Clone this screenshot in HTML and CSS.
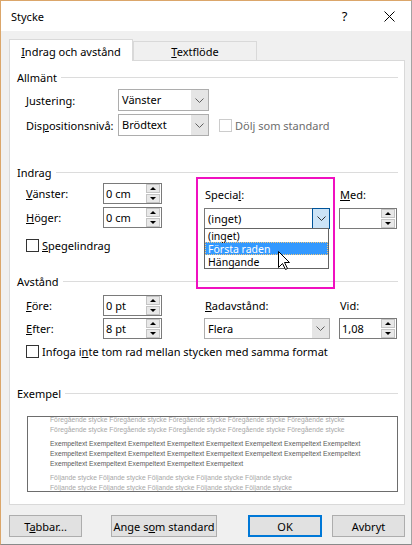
FILE: index.html
```html
<!DOCTYPE html>
<html lang="sv">
<head>
  <meta charset="UTF-8">
  <title>Stycke</title>
  <link rel="stylesheet" href="styles.css">
</head>
<body>
  <div class="dialog">
    <div class="titlebar">
      <span class="title">Stycke</span>
      <span class="caption-btn help">?</span>
      <span class="caption-btn close">
        <svg width="11" height="11" viewBox="0 0 11 11"><path d="M0.5 0.5 L10.5 10.5 M10.5 0.5 L0.5 10.5" stroke="#000" stroke-width="1" fill="none"/></svg>
      </span>
    </div>

    <div class="client">
      <div class="tabs">
        <div class="tab active"><u>I</u>ndrag och avstånd</div>
        <div class="tab"><u>T</u>extflöde</div>
      </div>

      <div class="panel">
        <!-- Allmänt -->
        <div class="group-head">Allmänt</div>
        <div class="rows-general">
          <div class="form-row">
            <span class="lbl-general"><u>J</u>ustering:</span>
            <div class="combo w-general">
              <span class="combo-text">Vänster</span>
              <span class="combo-btn"><svg width="9" height="5" viewBox="0 0 9 5"><polyline points="0.5,0.5 4.5,4.5 8.5,0.5" fill="none" stroke="#606060"/></svg></span>
            </div>
          </div>
          <div class="form-row">
            <span class="lbl-general">Dis<u>p</u>ositionsnivå:</span>
            <div class="combo w-general">
              <span class="combo-text">Brödtext</span>
              <span class="combo-btn"><svg width="9" height="5" viewBox="0 0 9 5"><polyline points="0.5,0.5 4.5,4.5 8.5,0.5" fill="none" stroke="#606060"/></svg></span>
            </div>
            <span class="check disabled"><span class="box"></span>Dölj som standard</span>
          </div>
        </div>

        <!-- Indrag -->
        <div class="group-head head-indent">Indrag</div>
        <div class="section-indent">
          <div class="col-left">
            <div class="form-row">
              <span class="lbl-indent"><u>V</u>änster:</span>
              <div class="spin">
                <span class="spin-text">0 cm</span>
                <svg class="spin-btns" width="14" height="19" viewBox="0 0 14 19"><rect x="0.5" y="0.5" width="13" height="8" fill="#e8e8e8" stroke="#c4c4c4"/><rect x="0.5" y="10.5" width="13" height="8" fill="#e8e8e8" stroke="#c4c4c4"/><polygon points="4,6 10,6 7,3" fill="#000"/><polygon points="4,13 10,13 7,16" fill="#000"/></svg>
              </div>
            </div>
            <div class="form-row">
              <span class="lbl-indent"><u>H</u>öger:</span>
              <div class="spin">
                <span class="spin-text">0 cm</span>
                <svg class="spin-btns" width="14" height="19" viewBox="0 0 14 19"><rect x="0.5" y="0.5" width="13" height="8" fill="#e8e8e8" stroke="#c4c4c4"/><rect x="0.5" y="10.5" width="13" height="8" fill="#e8e8e8" stroke="#c4c4c4"/><polygon points="4,6 10,6 7,3" fill="#000"/><polygon points="4,13 10,13 7,16" fill="#000"/></svg>
              </div>
            </div>
            <div class="check-row">
              <span class="check"><span class="box"></span><span><u>S</u>pegelindrag</span></span>
            </div>
          </div>

          <div class="col-special">
            <div class="field-label">Specia<u>l</u>:</div>
            <div class="combo open">
              <span class="combo-text">(inget)</span>
              <span class="combo-btn"><svg width="9" height="5" viewBox="0 0 9 5"><polyline points="0.5,0.5 4.5,4.5 8.5,0.5" fill="none" stroke="#333"/></svg></span>
            </div>
            <ul class="droplist">
              <li><span>(inget)</span></li>
              <li class="selected"><span>Första raden</span></li>
              <li><span>Hängande</span></li>
              <svg class="pointer" width="13" height="20" viewBox="0 0 13 20"><path d="M0.5 0.5 L0.5 16.5 L4.5 12.5 L7.5 18.5 L9.5 17.5 L6.5 11.5 L11.5 11.5 Z" fill="#fff" stroke="#000" stroke-linejoin="round"/></svg>
            </ul>
          </div>

          <div class="col-med">
            <div class="field-label"><u>M</u>ed:</div>
            <div class="spin w-med">
              <span class="spin-text"></span>
              <svg class="spin-btns" width="14" height="19" viewBox="0 0 14 19"><rect x="0.5" y="0.5" width="13" height="8" fill="#e8e8e8" stroke="#c4c4c4"/><rect x="0.5" y="10.5" width="13" height="8" fill="#e8e8e8" stroke="#c4c4c4"/><polygon points="4,6 10,6 7,3" fill="#000"/><polygon points="4,13 10,13 7,16" fill="#000"/></svg>
            </div>
          </div>

          <div class="callout"></div>
        </div>

        <!-- Avstånd -->
        <div class="group-head head-space">Avstånd</div>
        <div class="section-space">
          <div class="col-left">
            <div class="form-row">
              <span class="lbl-indent"><u>F</u>öre:</span>
              <div class="spin">
                <span class="spin-text">0 pt</span>
                <svg class="spin-btns" width="14" height="19" viewBox="0 0 14 19"><rect x="0.5" y="0.5" width="13" height="8" fill="#e8e8e8" stroke="#c4c4c4"/><rect x="0.5" y="10.5" width="13" height="8" fill="#e8e8e8" stroke="#c4c4c4"/><polygon points="4,6 10,6 7,3" fill="#000"/><polygon points="4,13 10,13 7,16" fill="#000"/></svg>
              </div>
            </div>
            <div class="form-row">
              <span class="lbl-indent"><u>E</u>fter:</span>
              <div class="spin">
                <span class="spin-text">8 pt</span>
                <svg class="spin-btns" width="14" height="19" viewBox="0 0 14 19"><rect x="0.5" y="0.5" width="13" height="8" fill="#e8e8e8" stroke="#c4c4c4"/><rect x="0.5" y="10.5" width="13" height="8" fill="#e8e8e8" stroke="#c4c4c4"/><polygon points="4,6 10,6 7,3" fill="#000"/><polygon points="4,13 10,13 7,16" fill="#000"/></svg>
              </div>
            </div>
          </div>

          <div class="col-special">
            <div class="field-label row-label"><u>R</u>adavstånd:</div>
            <div class="combo">
              <span class="combo-text">Flera</span>
              <span class="combo-btn"><svg width="9" height="5" viewBox="0 0 9 5"><polyline points="0.5,0.5 4.5,4.5 8.5,0.5" fill="none" stroke="#606060"/></svg></span>
            </div>
          </div>

          <div class="col-med">
            <div class="field-label row-label">Vid:</div>
            <div class="spin w-med">
              <span class="spin-text">1,08</span>
              <svg class="spin-btns" width="14" height="19" viewBox="0 0 14 19"><rect x="0.5" y="0.5" width="13" height="8" fill="#e8e8e8" stroke="#c4c4c4"/><rect x="0.5" y="10.5" width="13" height="8" fill="#e8e8e8" stroke="#c4c4c4"/><polygon points="4,6 10,6 7,3" fill="#000"/><polygon points="4,13 10,13 7,16" fill="#000"/></svg>
            </div>
          </div>
        </div>
        <div class="check-row row-contextual">
          <span class="check"><span class="box"></span><span>Infoga i<u>n</u>te tom rad mellan stycken med samma format</span></span>
        </div>

        <!-- Exempel -->
        <div class="group-head head-preview">Exempel</div>
        <div class="preview">
          <div class="pv-block pv-prev">
            <div>Föregående stycke Föregående stycke Föregående stycke Föregående stycke Föregående stycke</div>
            <div>Föregående stycke Föregående stycke Föregående stycke Föregående stycke Föregående stycke</div>
          </div>
          <div class="pv-block pv-sample">
            <div>Exempeltext Exempeltext Exempeltext Exempeltext Exempeltext Exempeltext Exempeltext Exempeltext</div>
            <div>Exempeltext Exempeltext Exempeltext Exempeltext Exempeltext Exempeltext Exempeltext Exempeltext</div>
            <div>Exempeltext Exempeltext Exempeltext Exempeltext Exempeltext</div>
          </div>
          <div class="pv-block pv-next">
            <div>Följande stycke Följande stycke Följande stycke Följande stycke Följande stycke</div>
            <div>Följande stycke Följande stycke Följande stycke Följande stycke Följande stycke</div>
          </div>
        </div>
      </div>

      <div class="footer">
        <button class="btn">T<u>a</u>bbar...</button>
        <button class="btn btn-default-set">Ange s<u>o</u>m standard</button>
        <button class="btn btn-ok">OK</button>
        <button class="btn btn-cancel">Avbryt</button>
      </div>
    </div>
  </div>
</body>
</html>
```

FILE: styles.css
```css
* {
  box-sizing: border-box;
}
body {
  margin: 0;
  font-family: "Noto Sans", "Segoe UI", sans-serif;
  font-size: 11px;
  color: #000;
  background: #fff;
}
u {
  text-decoration: underline;
  text-underline-offset: 1px;
}

/* window frame */
.dialog {
  width: 412px;
  height: 545px;
  border: 1px solid;
  border-color: #dba66a #a3a3a3 #8a8a8a #dba66a;
  background: #f0f0f0;
  display: flex;
  flex-direction: column;
}
.titlebar {
  height: 30px;
  background: #fff;
  display: flex;
  align-items: center;
  flex-shrink: 0;
}
.title {
  flex: 1;
  padding-left: 10px;
}
.caption-btn {
  height: 30px;
  display: flex;
  align-items: center;
  justify-content: center;
}
.help {
  width: 45px;
  font-size: 13px;
}
.close {
  width: 44px;
}

.client {
  flex: 1;
  padding: 8px 6px 0 8px;
}

/* tabs */
.tabs {
  display: flex;
  align-items: flex-end;
  height: 22px;
  margin-bottom: -1px;
  position: relative;
  z-index: 1;
}
.tab {
  width: 124px;
  height: 19px;
  margin-bottom: 1px;
  border: 1px solid #d9d9d9;
  border-bottom: none;
  text-align: center;
  line-height: 20px;
}
.tab.active {
  height: 22px;
  margin-bottom: 0;
  background: #fff;
  line-height: 24px;
}

.panel {
  width: 396px;
  height: 445px;
  border: 1px solid #d9d9d9;
  background: #fff;
  padding: 0 6px 0 7px;
}

/* group headings with rule */
.group-head {
  display: flex;
  align-items: center;
  height: 16px;
  margin-top: 8px;
}
.group-head::after {
  content: "";
  flex: 1;
  height: 1px;
  margin-left: 4px;
  background: #dcdcdc;
}
.head-indent { margin-top: 28px; }
.head-space { margin-top: 18px; }
.head-preview { margin-top: 24px; }

.form-row {
  display: flex;
  align-items: center;
  height: 21px;
}

.rows-general {
  padding-left: 9px;
  margin-top: 4px;
}
.rows-general .form-row {
  height: 22px;
}
.rows-general .form-row + .form-row {
  margin-top: 3px;
}
.lbl-general {
  width: 92px;
}
.lbl-indent {
  width: 77px;
}

/* combo boxes */
.combo {
  display: flex;
  width: 126px;
  height: 21px;
  border: 1px solid #adadad;
  background: #fff;
}
.combo.w-general {
  width: 91px;
  height: 22px;
}
.combo-text {
  flex: 1;
  padding-left: 3px;
  line-height: 19px;
}
.w-general .combo-text {
  line-height: 20px;
}
.combo-btn {
  width: 17px;
  background: #e5e5e5;
  display: flex;
  align-items: center;
  justify-content: center;
}
.combo.open {
  border-color: #7a7a7a;
}
.combo.open .combo-btn {
  background: #cce4f7;
  border: 1px solid #005499;
  margin: -1px -1px -1px 0;
  width: 18px;
}

/* spin boxes */
.spin {
  display: flex;
  align-items: center;
  width: 59px;
  height: 21px;
  border: 1px solid #7a7a7a;
  background: #fff;
}
.spin.w-med {
  width: 58px;
}
.spin-text {
  flex: 1;
  padding-left: 2px;
  line-height: 19px;
}
.spin-btns {
  margin-right: 1px;
  display: block;
}

/* check boxes */
.check {
  display: flex;
  align-items: center;
  gap: 3px;
}
.check .box {
  width: 13px;
  height: 13px;
  border: 1px solid #333;
  background: #fff;
}
.check.disabled {
  margin-left: 10px;
  color: #6d6d6d;
}
.check.disabled .box {
  border-color: #cccccc;
}
.check-row {
  display: flex;
  align-items: center;
  height: 20px;
}

/* Indrag */
.section-indent {
  display: flex;
  position: relative;
  margin-top: 3px;
  padding-left: 9px;
}
.col-left {
  width: 178px;
}
.section-indent .form-row + .form-row {
  margin-top: 3px;
}
.section-indent .check-row {
  margin-top: 7px;
}
.col-special {
  width: 126px;
  position: relative;
}
.col-med {
  width: 58px;
  margin-left: 9px;
}
.field-label {
  padding: 4px 0 0 1px;
  line-height: 16px;
  margin-bottom: 5px;
}
.field-label.row-label {
  padding-top: 0;
  line-height: 21px;
  margin-bottom: 2px;
}

.droplist {
  position: absolute;
  top: 45px;
  left: 0;
  width: 125px;
  margin: 0;
  padding: 0;
  list-style: none;
  border: 1px solid #646464;
  background: #fff;
  z-index: 2;
}
.droplist li {
  display: flex;
  align-items: center;
  height: 13px;
  padding-left: 3px;
}
.droplist li span {
  line-height: 12px;
  font-size: 10.5px;
}
.droplist li.selected {
  background: #3399ff;
  color: #fff;
  outline: 1px dotted #f3c87d;
  outline-offset: -1px;
}
.pointer {
  position: absolute;
  left: 73px;
  top: 22px;
}

.callout {
  position: absolute;
  left: 179px;
  top: -6px;
  width: 139px;
  height: 112px;
  border: 2px solid #f010c0;
  pointer-events: none;
}

/* Avstånd */
.section-space {
  display: flex;
  margin-top: 6px;
  padding-left: 9px;
}
.section-space .form-row + .form-row {
  margin-top: 2px;
}
.row-contextual {
  margin-top: 2px;
  padding-left: 9px;
}

/* Exempel: miniature page */
.preview {
  margin: 15px 0 0 10px;
  height: 76px;
  border: 1px solid #6d6d6d;
  padding-left: 22px;
  overflow: hidden;
  font-family: "Liberation Sans", Arial, sans-serif;
  font-size: 6.75px;
  line-height: 10px;
  white-space: nowrap;
}
.pv-prev {
  margin-top: -2px;
  color: #a8a8a8;
}
.pv-sample {
  margin-top: 4px;
  color: #5a5a5a;
}
.pv-next {
  margin-top: 4px;
  color: #a8a8a8;
}

/* buttons */
.footer {
  display: flex;
  margin-top: 10px;
}
.btn {
  width: 73px;
  height: 22px;
  padding: 0;
  border: 1px solid #adadad;
  background: #e1e1e1;
  font-family: inherit;
  font-size: 11px;
  color: #000;
}
.btn-default-set {
  width: 106px;
  margin-left: 29px;
}
.btn-ok {
  width: 74px;
  margin-left: auto;
  border: 2px solid #0078d7;
}
.btn-cancel {
  margin-left: 10px;
}
```
